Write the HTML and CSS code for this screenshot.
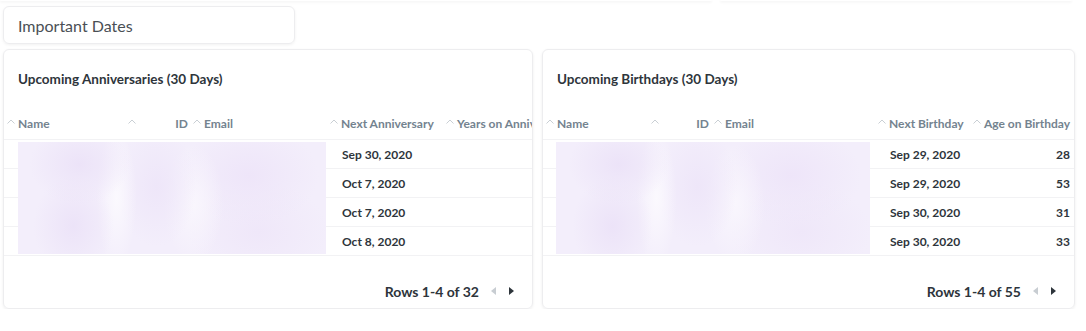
FILE: index.html
```html
<!DOCTYPE html>
<html>
<head>
    <meta charset="UTF-8">
    <title>Important Dates</title>
    <!-- dashboard styling -->
    <link rel="stylesheet" href="styles.css">
</head>
<body>
    <!-- bottom edges of the cards in the section above -->
    <div class="prev-row">
        <div class="prev-card prev-wide"></div>
        <div class="prev-card prev-narrow"></div>
    </div>

    <div class="text-card">Important Dates</div>

    <div class="dash-grid">
        <!-- anniversaries -->
        <section class="card">
            <h2 class="card-title">Upcoming Anniversaries (30 Days)</h2>
            <div class="table anniv">
                <div class="row head">
                    <div class="cell"><svg class="sort" viewBox="0 0 8 5"><polyline points="0.5,4.5 4,1 7.5,4.5"/></svg>Name</div>
                    <div class="cell split"><svg class="sort" viewBox="0 0 8 5"><polyline points="0.5,4.5 4,1 7.5,4.5"/></svg>ID</div>
                    <div class="cell"><svg class="sort" viewBox="0 0 8 5"><polyline points="0.5,4.5 4,1 7.5,4.5"/></svg>Email</div>
                    <div class="cell"><svg class="sort" viewBox="0 0 8 5"><polyline points="0.5,4.5 4,1 7.5,4.5"/></svg>Next Anniversary</div>
                    <div class="cell"><svg class="sort" viewBox="0 0 8 5"><polyline points="0.5,4.5 4,1 7.5,4.5"/></svg>Years on Anniversary</div>
                </div>
                <div class="body">
                    <div class="row"><div class="cell"></div><div class="cell"></div><div class="cell"></div><div class="cell date">Sep 30, 2020</div><div class="cell"></div></div>
                    <div class="row"><div class="cell"></div><div class="cell"></div><div class="cell"></div><div class="cell date">Oct 7, 2020</div><div class="cell"></div></div>
                    <div class="row"><div class="cell"></div><div class="cell"></div><div class="cell"></div><div class="cell date">Oct 7, 2020</div><div class="cell"></div></div>
                    <div class="row"><div class="cell"></div><div class="cell"></div><div class="cell"></div><div class="cell date">Oct 8, 2020</div><div class="cell"></div></div>
                    <!-- hidden personal data -->
                    <div class="redacted"></div>
                </div>
            </div>
            <div class="pager">
                <span>Rows 1-4 of 32</span>
                <span class="tri tri-left"></span>
                <span class="tri tri-right"></span>
            </div>
        </section>

        <!-- birthdays -->
        <section class="card">
            <h2 class="card-title">Upcoming Birthdays (30 Days)</h2>
            <div class="table bday">
                <div class="row head">
                    <div class="cell"><svg class="sort" viewBox="0 0 8 5"><polyline points="0.5,4.5 4,1 7.5,4.5"/></svg>Name</div>
                    <div class="cell split"><svg class="sort" viewBox="0 0 8 5"><polyline points="0.5,4.5 4,1 7.5,4.5"/></svg>ID</div>
                    <div class="cell"><svg class="sort" viewBox="0 0 8 5"><polyline points="0.5,4.5 4,1 7.5,4.5"/></svg>Email</div>
                    <div class="cell"><svg class="sort" viewBox="0 0 8 5"><polyline points="0.5,4.5 4,1 7.5,4.5"/></svg>Next Birthday</div>
                    <div class="cell num"><svg class="sort" viewBox="0 0 8 5"><polyline points="0.5,4.5 4,1 7.5,4.5"/></svg>Age on Birthday</div>
                </div>
                <div class="body">
                    <div class="row"><div class="cell"></div><div class="cell"></div><div class="cell"></div><div class="cell date">Sep 29, 2020</div><div class="cell num val">28</div></div>
                    <div class="row"><div class="cell"></div><div class="cell"></div><div class="cell"></div><div class="cell date">Sep 29, 2020</div><div class="cell num val">53</div></div>
                    <div class="row"><div class="cell"></div><div class="cell"></div><div class="cell"></div><div class="cell date">Sep 30, 2020</div><div class="cell num val">31</div></div>
                    <div class="row"><div class="cell"></div><div class="cell"></div><div class="cell"></div><div class="cell date">Sep 30, 2020</div><div class="cell num val">33</div></div>
                    <div class="redacted"></div>
                </div>
            </div>
            <div class="pager">
                <span>Rows 1-4 of 55</span>
                <span class="tri tri-left"></span>
                <span class="tri tri-right"></span>
            </div>
        </section>
    </div>
</body>
</html>
```

FILE: styles.css
```css
body {
    margin: 0;
    background-color: #FFFFFF;
    font-family: Lato, "Open Sans", sans-serif;
    color: #2E353B;
    }
.prev-row {
    display: flex;
    gap: 8px;
    height: 2px;
    }
.prev-card {
    height: 1px;
    background-color: #FFFFFF;
    border-radius: 0 0 6px 6px;
    box-shadow: 0 1px 3px rgba(0,0,0,0.10);
    }
.prev-wide {
    width: 712px;
    }
.prev-narrow {
    width: 352px;
    }
.text-card {
    margin: 4px 0 0 3px;
    width: 276px;
    height: 34px;
    padding: 2px 0 0 14px;
    box-sizing: content-box;
    border: 1px solid #EDEDEF;
    border-radius: 6px;
    box-shadow: 0 1px 3px rgba(0,0,0,0.06);
    font-size: 16px;
    line-height: 34px;
    color: #4A4F55;
    }
.dash-grid {
    display: grid;
    grid-template-columns: 530px 533px;
    gap: 9px;
    margin: 5px 0 0 3px;
    }
.card {
    height: 258px;
    border: 1px solid #EDEDEF;
    border-radius: 6px;
    box-shadow: 0 1px 3px rgba(0,0,0,0.07);
    overflow: hidden;
    display: flex;
    flex-direction: column;
    }
.card-title {
    margin: 21px 0 0 14px;
    font-size: 13.5px;
    line-height: 16px;
    font-weight: 700;
    color: #2E353B;
    }
.table {
    margin-top: 20px;
    overflow: hidden;
    }
.row {
    display: grid;
    height: 28px;
    border-bottom: 1px solid #F2F2F4;
    white-space: nowrap;
    }
.anniv .row {
    grid-template-columns: 121px 65px 137px 116px 200px;
    }
.bday .row {
    grid-template-columns: 105px 63px 164px 93px 108px;
    }
.row.head {
    height: 32px;
    }
.cell {
    display: flex;
    align-items: center;
    padding-left: 3px;
    overflow: hidden;
    font-size: 12px;
    font-weight: 700;
    }
.head .cell {
    color: #74838F;
    }
.sort {
    flex: none;
    width: 8px;
    height: 5px;
    margin-right: 3px;
    margin-bottom: 3px;
    fill: none;
    stroke: #C9CFD4;
    stroke-width: 1;
    }
.split {
    justify-content: space-between;
    padding-right: 2px;
    }
.date {
    padding-left: 15px;
    font-weight: 700;
    }
.num {
    justify-content: flex-end;
    padding-right: 6px;
    }
.val {
    font-size: 12px;
    }
.body {
    position: relative;
    }
.redacted {
    position: absolute;
    top: 2px;
    left: 14px;
    width: 308px;
    height: 112px;
    background-color: #F3EEFB;
    background-image:
        radial-gradient(ellipse 50px 40px at 20% 20%, #ECE3F8, transparent),
        radial-gradient(ellipse 40px 50px at 18% 75%, #ECE3F8, transparent),
        radial-gradient(ellipse 20px 70px at 32% 50%, #FBF9FE, transparent),
        radial-gradient(ellipse 40px 60px at 45% 40%, #EEE6F9, transparent),
        radial-gradient(ellipse 30px 60px at 57% 55%, #F9F6FD, transparent),
        radial-gradient(ellipse 70px 50px at 75% 30%, #EEE5F9, transparent),
        radial-gradient(ellipse 70px 50px at 78% 80%, #EFE7F9, transparent);
    }
.bday .redacted {
    left: 13px;
    width: 314px;
    }
.pager {
    margin-top: auto;
    margin-bottom: 6px;
    display: flex;
    align-items: center;
    justify-content: flex-end;
    padding-right: 18px;
    height: 22px;
    font-size: 14px;
    font-weight: 700;
    color: #2E353B;
    }
.tri {
    width: 0;
    height: 0;
    border-top: 4px solid transparent;
    border-bottom: 4px solid transparent;
    }
.tri-left {
    margin-left: 12px;
    border-right: 5px solid #C8CDD2;
    }
.tri-right {
    margin-left: 13px;
    border-left: 5px solid #2E353B;
    }
```
